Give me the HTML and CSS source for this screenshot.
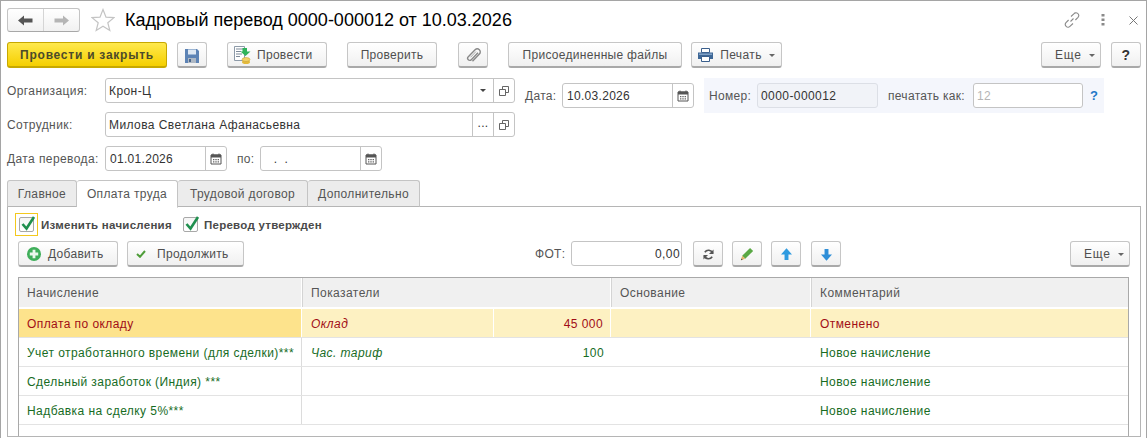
FILE: index.html
```html
<!DOCTYPE html>
<html lang="ru">
<head>
<meta charset="utf-8">
<title>Кадровый перевод</title>
<link rel="stylesheet" href="styles.css">
</head>
<body>
<svg class="defs" width="0" height="0">
  <symbol id="cal" viewBox="0 0 12 12"><path d="M1 2h10v9H1z" fill="none" stroke="#555" stroke-width="1"/><path d="M1 1.500h10v3H1z" fill="#555"/><path d="M3 0.500v2M9 0.500v2" stroke="#555"/><path d="M3 6h1.400v1.200H3zM5.300 6h1.400v1.200H5.300zM7.600 6H9v1.200H7.600zM3 8.300h1.400v1.200H3zM5.300 8.300h1.400v1.200H5.300zM7.600 8.300H9v1.200H7.600z" fill="#666"/></symbol>
  <symbol id="open" viewBox="0 0 10 10"><path d="M3.500 3V.5h6v6H7M.5 3.500h6v6h-6z" fill="none" stroke="#555" stroke-width=".9"/></symbol>
</svg>
<div class="window">
  <header class="titlebar">
    <div class="nav">
      <span class="nav-btn"><svg width="15" height="11" viewBox="0 0 15 11"><path d="M0 5.500 6 .5v3h8.500v4H6v3z" fill="#555"/></svg></span>
      <span class="nav-btn"><svg width="15" height="11" viewBox="0 0 15 11"><path d="M15 5.500 9 .5v3H.5v4H9v3z" fill="#b5b5b5"/></svg></span>
    </div>
    <svg class="star" width="24" height="24" viewBox="0 0 24 24"><path d="M12 1.500l3 7.600 8 .5-6.200 5.100 2 7.800L12 18.200l-6.800 4.300 2-7.800L1 9.600l8-.5z" fill="#fff" stroke="#c4c4c4" stroke-width="1.200"/></svg>
    <h1 class="title">Кадровый перевод 0000-000012 от 10.03.2026</h1>
    <div class="win-tools">
      <svg class="i-link" width="16" height="16" viewBox="0 0 16 16"><g fill="none" stroke="#8a8a8a" stroke-width="1.100"><path d="M6.500 9.500 9.500 6.500"/><path d="M7 4.500 9.800 1.800a2.600 2.600 0 0 1 4.200 3.500L11.400 8"/><path d="M9 11.500 6.200 14.200A2.600 2.600 0 0 1 2 10.700L4.600 8"/></g></svg>
      <svg class="i-dots" width="4" height="12" viewBox="0 0 4 12"><path d="M.5 0h3v2.500h-3zM.5 4.500h3V7h-3zM.5 9h3v2.500h-3z" fill="#8a8a8a"/></svg>
      <svg class="i-close" width="9" height="9" viewBox="0 0 9 9"><path d="M.5.500l8 8M8.500.5l-8 8" stroke="#777" fill="none"/></svg>
    </div>
  </header>

  <div class="toolbar">
    <button class="btn btn-primary w-post-close">Провести и закрыть</button>
    <button class="btn w-icon ml-10"><svg width="14" height="15" viewBox="0 0 14 15"><path d="M0 1h12l2 2v12H0z" fill="#5d83b5"/><path d="M3 1.500h8v5H3z" fill="#dfe8f3"/><path d="M3 10h8v5H3z" fill="#aeb8c4"/><path d="M4 11h2v3H4z" fill="#4a668c"/></svg></button>
    <button class="btn w-post ml-20"><svg class="ico-post" width="17" height="20" viewBox="0 0 17 20"><path d="M.5 1.500h10v14H.5z" fill="#fff" stroke="#8d9aa8"/><path d="M2 4h7M2 6.500h5M2 9h6M2 11.500h4" stroke="#7d8a99"/><ellipse cx="12" cy="17" rx="4" ry="2" fill="#e3b93a"/><ellipse cx="12" cy="14.500" rx="4" ry="2" fill="#f1d268" stroke="#c59b28" stroke-width=".5"/><path d="M8.500 3H13v3.500h3.500l-5 4.500-5-4.500h2z" fill="#2fb35a"/></svg>Провести</button>
    <button class="btn w-check ml-20">Проверить</button>
    <button class="btn w-icon ml-21"><svg width="15" height="16" viewBox="0 0 15 16"><path d="M12.500 5 5.800 12a2.100 2.100 0 0 1-3-3l6.800-7a3 3 0 0 1 4.300 4.200L7 13.400" transform="translate(-.5 .8)" fill="none" stroke="#888" stroke-width="1.400"/><path d="M10 4.500 4.500 10.300" fill="none" stroke="#aaa"/></svg></button>
    <button class="btn w-files ml-20">Присоединенные файлы</button>
    <button class="btn w-print ml-9"><svg class="btn-ico" width="15" height="14" viewBox="0 0 15 14"><path d="M3.500.5h8v4h-8z" fill="#fff" stroke="#3a5f8c"/><path d="M0 4.500h15V11H0z" fill="#3e6796"/><path d="M3.500 8.500h8v5h-8z" fill="#fff" stroke="#3a5f8c"/><path d="M1 5.500h13v1.500H1z" fill="#7ea0c6"/></svg>Печать<i class="caret"></i></button>
    <button class="btn w-more push-right">Еще<i class="caret"></i></button>
    <button class="btn w-help ml-10">?</button>
  </div>

  <div class="form">
    <div class="form-row row-org">
      <label class="lbl lbl-main">Организация:</label>
      <div class="field f-org"><span class="val">Крон-Ц</span><span class="cell"><i class="caret dark"></i></span><span class="cell"><svg width="10" height="10"><use href="#open"/></svg></span></div>
      <label class="lbl lbl-date">Дата:</label>
      <div class="field f-date"><span class="val">10.03.2026</span><span class="cell"><svg width="12" height="12"><use href="#cal"/></svg></span></div>
      <div class="number-group">
        <label class="lbl lbl-num">Номер:</label>
        <div class="field f-num"><span class="val">0000-000012</span></div>
        <label class="lbl lbl-print">печатать как:</label>
        <div class="field f-print"><span class="val muted">12</span></div>
        <span class="hint">?</span>
      </div>
    </div>
    <div class="form-row row-emp">
      <label class="lbl lbl-main">Сотрудник:</label>
      <div class="field f-org"><span class="val">Милова Светлана Афанасьевна</span><span class="cell dots">...</span><span class="cell"><svg width="10" height="10"><use href="#open"/></svg></span></div>
    </div>
    <div class="form-row row-transfer">
      <label class="lbl lbl-main">Дата перевода:</label>
      <div class="field f-from"><span class="val">01.01.2026</span><span class="cell"><svg width="12" height="12"><use href="#cal"/></svg></span></div>
      <label class="lbl lbl-to">по:</label>
      <div class="field f-from"><span class="val spaced">&nbsp;.&nbsp;&nbsp;.</span><span class="cell"><svg width="12" height="12"><use href="#cal"/></svg></span></div>
    </div>
  </div>

  <nav class="tabs">
    <span class="tab t1">Главное</span>
    <span class="tab t2 active">Оплата труда</span>
    <span class="tab t3">Трудовой договор</span>
    <span class="tab t4">Дополнительно</span>
  </nav>

  <section class="panel">
    <div class="checks">
      <span class="focus-ring"><span class="box"><svg width="15" height="15" viewBox="0 0 15 15"><path d="M1.500 8 5.500 12.500 13 1" fill="none" stroke="#1f8f4e" stroke-width="2.600"/></svg></span></span>
      <span class="chk-label cl1">Изменить начисления</span>
      <span class="box box2"><svg width="15" height="15" viewBox="0 0 15 15"><path d="M1.500 8 5.500 12.500 13 1" fill="none" stroke="#1f8f4e" stroke-width="2.600"/></svg></span>
      <span class="chk-label cl2">Перевод утвержден</span>
    </div>
    <div class="cmdbar">
      <button class="btn w-add"><svg class="ico-add" width="14" height="14" viewBox="0 0 15 15"><circle cx="7.500" cy="7.500" r="7.500" fill="#3fae5a"/><path d="M6 3h3v3h3v3H9v3H6V9H3V6h3z" fill="#eaf7ec"/></svg>Добавить</button>
      <button class="btn w-cont ml-9"><svg class="ico-check" width="10" height="8" viewBox="0 0 10 8"><path d="M1 4l3 2.800L9 1" fill="none" stroke="#4f9d3a" stroke-width="2"/></svg>Продолжить</button>
      <label class="lbl lbl-fot">ФОТ:</label>
      <div class="field f-fot"><span class="val right">0,00</span></div>
      <button class="btn w-sq ml-11"><svg width="11" height="11" viewBox="0 0 12 12"><path d="M10.500 4.500A4.800 4.800 0 0 0 2 3.500M1.500 7.500A4.800 4.800 0 0 0 10 8.500" fill="none" stroke="#555" stroke-width="1.800"/><path d="M11.500 0.500v5h-5zM.5 11.500v-5h5z" fill="#555"/></svg></button>
      <button class="btn w-sq ml-9"><svg width="14" height="14" viewBox="0 0 16 16"><path d="M11.500 1 15 4.500 6 13.500 2.500 10z" fill="#5aa845"/><path d="M2.500 10 6 13.500 1 15z" fill="#e3b16b"/><path d="M1.800 13 3 14.500 1 15z" fill="#444"/></svg></button>
      <button class="btn w-sq ml-9"><svg width="11" height="13" viewBox="0 0 14 16"><path d="M7 0l7 8H9.500v7h-5V8H0z" fill="#2f9be0"/></svg></button>
      <button class="btn w-sq ml-10"><svg width="11" height="13" viewBox="0 0 14 16"><path d="M7 16l7-8H9.500V1h-5v7H0z" fill="#2f8fd8"/></svg></button>
      <button class="btn w-more push-right">Еще<i class="caret"></i></button>
    </div>
    <div class="grid">
      <div class="g-row g-head">
        <div class="c c1">Начисление</div>
        <div class="c c2">Показатели</div>
        <div class="c c3">Основание</div>
        <div class="c c4">Комментарий</div>
      </div>
      <div class="g-row r-sel">
        <div class="c c1 cur">Оплата по окладу</div>
        <div class="c ca it">Оклад</div>
        <div class="c cb num">45 000</div>
        <div class="c c3"></div>
        <div class="c c4">Отменено</div>
      </div>
      <div class="g-row r-new">
        <div class="c c1">Учет отработанного времени (для сделки)***</div>
        <div class="c ca it">Час. тариф</div>
        <div class="c cb num">100</div>
        <div class="c c3"></div>
        <div class="c c4">Новое начисление</div>
      </div>
      <div class="g-row r-new">
        <div class="c c1">Сдельный заработок (Индия) ***</div>
        <div class="c c2"></div>
        <div class="c c3"></div>
        <div class="c c4">Новое начисление</div>
      </div>
      <div class="g-row r-new">
        <div class="c c1">Надбавка на сделку 5%***</div>
        <div class="c c2"></div>
        <div class="c c3"></div>
        <div class="c c4">Новое начисление</div>
      </div>
    </div>
  </section>
</div>
</body>
</html>
```
FILE: styles.css
```css
* { box-sizing: border-box; }
html, body { margin: 0; padding: 0; background: #fff; }
body { font: 12px "Liberation Sans", Arial, sans-serif; color: #4b4b4b; letter-spacing: .3px; overflow: hidden; }
.defs { position: absolute; }
.window { width: 1147px; height: 438px; border: 1px solid #a5a5a5; border-width: 1px 1px 0 1px; padding: 0 5px 0 6px; overflow: hidden; background: #fff; }

.titlebar { display: flex; align-items: center; height: 31px; padding-top: 7px; }
.nav { display: flex; width: 73px; height: 24px; border: 1px solid #c4c4c4; border-bottom-color: #a8a8a8; border-radius: 3px; background: linear-gradient(#fff, #f1f1f1); }
.nav-btn { flex: 1; display: flex; align-items: center; justify-content: center; }
.nav-btn + .nav-btn { border-left: 1px solid #d5d5d5; }
.star { margin-left: 11px; }
.title { margin: 0 0 0 10px; font-size: 18px; font-weight: 400; color: #000; letter-spacing: 0; white-space: nowrap; }
.win-tools { margin-left: auto; display: flex; align-items: center; padding-right: 3px; }
.i-dots { margin-left: 21px; }
.i-close { margin-left: 24px; }

.toolbar { display: flex; margin-top: 10px; height: 26px; }
.btn { display: inline-flex; align-items: center; justify-content: center; height: 26px; padding: 1px 0 0; font: inherit; letter-spacing: inherit; color: #4f4f4f; border: 1px solid #c6c6c6; border-bottom: 2px solid #a9a9a9; border-radius: 3px; background: linear-gradient(#fff, #f0f0f0); }
.btn-primary { background: linear-gradient(#ffe94d, #f5cf00); border-color: #c7a800; font-weight: 700; color: #4c4a2a; letter-spacing: .75px; }
.btn-ico { margin-right: 7px; }
.ico-post { margin-right: 6px; }
.ico-add { margin-right: 7px; }
.ico-check { margin-right: 11px; }
.w-post-close { width: 160px; }
.w-icon { width: 30px; }
.w-post { width: 100px; justify-content: flex-start; padding-left: 6px; }
.w-check { width: 90px; }
.w-files { width: 174px; }
.w-print { width: 91px; letter-spacing: .4px; }
.w-more { width: 60px; justify-content: flex-start; padding-left: 13px; letter-spacing: .8px; }
.w-help { width: 30px; font-weight: 700; font-size: 14px; color: #333; }
.w-add { width: 100px; justify-content: flex-start; padding-left: 8px; }
.w-cont { width: 117px; justify-content: flex-start; padding-left: 8px; }
.w-sq { width: 30px; }
.ml-9 { margin-left: 9px; }
.ml-10 { margin-left: 10px; }
.ml-11 { margin-left: 11px; }
.ml-20 { margin-left: 20px; }
.ml-21 { margin-left: 21px; }
.push-right { margin-left: auto; }
.caret { display: inline-block; margin-left: 7px; border: 3px solid transparent; border-top: 3px solid #666; border-bottom: 0; }
.caret.dark { margin: 0; border-top-color: #444; }

.form { margin-top: 10px; }
.form-row { display: flex; }
.row-org { height: 34px; }
.row-emp { height: 34px; }
.row-transfer { height: 34px; }
.lbl { display: block; line-height: 27px; white-space: nowrap; color: #555; }
.lbl-main { width: 98px; flex: none; letter-spacing: .4px; }
.lbl-date { margin: 5px 0 0 10px; width: 37px; }
.lbl-num { margin: 5px 0 0 0; width: 48px; }
.lbl-print { margin: 5px 0 0 10px; width: 85px; }
.lbl-to { margin-left: 10px; width: 23px; }
.lbl-fot { margin-left: 291px; width: 36px; line-height: 26px; }
.field { display: flex; height: 25px; background: #fff; border: 1px solid #c4c4c4; border-radius: 3px; color: #333; }
.val { flex: 1; padding-left: 3px; line-height: 25px; white-space: nowrap; overflow: hidden; letter-spacing: .42px; }
.val.right { text-align: right; padding: 0 1px 0 0; }
.val.muted { color: #b5b5b5; }
.cell { flex: none; width: 21px; display: flex; align-items: center; justify-content: center; border-left: 1px solid #c4c4c4; }
.dots { align-items: flex-start; line-height: 20px; }
.f-org { width: 410px; }
.f-date { width: 132px; margin-top: 5px; }
.f-date .val, .f-from .val { padding-left: 4px; letter-spacing: .3px; }
.f-from .val.spaced { padding-left: 9px; }
.f-from { width: 122px; }
.f-num { width: 121px; margin-top: 5px; background: #f1f3f8; border-color: #dcdfe6; }
.f-print { width: 110px; margin-top: 5px; }
.f-fot { width: 111px; }
.number-group { display: flex; height: 35px; width: 400px; margin-left: 10px; padding-left: 5px; background: #f4f6fc; }
.hint { margin: 5px 0 0 7px; line-height: 26px; font-weight: 700; font-size: 13px; color: #1f78c8; }

.tabs { display: flex; height: 27px; margin-top: 0; position: relative; z-index: 1; letter-spacing: .35px; }
.tab { height: 27px; line-height: 27px; text-align: center; background: #ececec; border: 1px solid #c4c4c4; border-bottom: 1px solid #b5b5b5; border-left-width: 0; border-radius: 3px 3px 0 0; color: #555; }
.tab.t1 { border-left-width: 1px; }
.tab.active { background: #fff; border-bottom-color: #fff; height: 28px; }
.t1 { width: 70px; }
.t2 { width: 101px; }
.t3 { width: 130px; }
.t4 { width: 112px; }

.panel { width: 1134px; height: 231px; margin-top: -1px; border: 1px solid #b5b5b5; padding: 0 10px 0 10px; }
.checks { display: flex; align-items: center; height: 34px; padding-top: 1px; }
.focus-ring { width: 23px; height: 23px; margin-left: -3px; border: 1px solid #f3c81e; display: flex; align-items: center; justify-content: center; }
.box { position: relative; display: block; width: 15px; height: 15px; border: 1px solid #a8a8a8; border-radius: 2px; background: linear-gradient(#f5f5f5, #fff); }
.box svg { position: absolute; left: 1px; top: -2px; }
.box2 { margin-left: 11px; }
.chk-label { font-size: 11.5px; font-weight: 700; color: #4a4a4a; letter-spacing: .26px; white-space: nowrap; }
.cl1 { margin-left: 3px; width: 131px; }
.cl2 { margin-left: 6px; }

.cmdbar { display: flex; height: 26px; }
.grid { margin-top: 10px; width: 1111px; height: 159px; border: 1px solid #a9a9a9; border-bottom: 0; letter-spacing: .43px; }
.g-row { display: grid; grid-template-columns: 283px 192px 117px 200px 1fr; height: 29px; border-bottom: 1px solid #e3e3e3; }
.g-row .c1 { grid-column: 1; }
.c { padding: 0 7px 0 9px; line-height: 30px; white-space: nowrap; overflow: hidden; }
.c1 { padding-left: 8px; border-right: 1px solid #dcdcdc; }
.c2 { grid-column: 2 / 4; }
.ca { grid-column: 2; }
.cb { grid-column: 3; }
.c3 { grid-column: 4; }
.c4 { grid-column: 5; }
.g-head { height: 31px; background: #f0f0f0; border-bottom: 2px solid #fff; box-shadow: 0 1px 0 #d4d4d4; }
.g-head .c { border-right: 1px solid #fff; box-shadow: 1px 0 0 #d4d4d4; line-height: 30px; color: #555; }
.g-head .c4 { border-right: 0; box-shadow: none; }
.it { font-style: italic; }
.num { text-align: right; }
.r-sel { background: #fdf1c2; color: #a10d16; }
.r-sel .c { border-right: 1px solid #fff; }
.r-sel .c4 { border-right: 0; }
.r-sel .cur { background: #fde38c; }
.r-new { color: #176c1f; }
```
